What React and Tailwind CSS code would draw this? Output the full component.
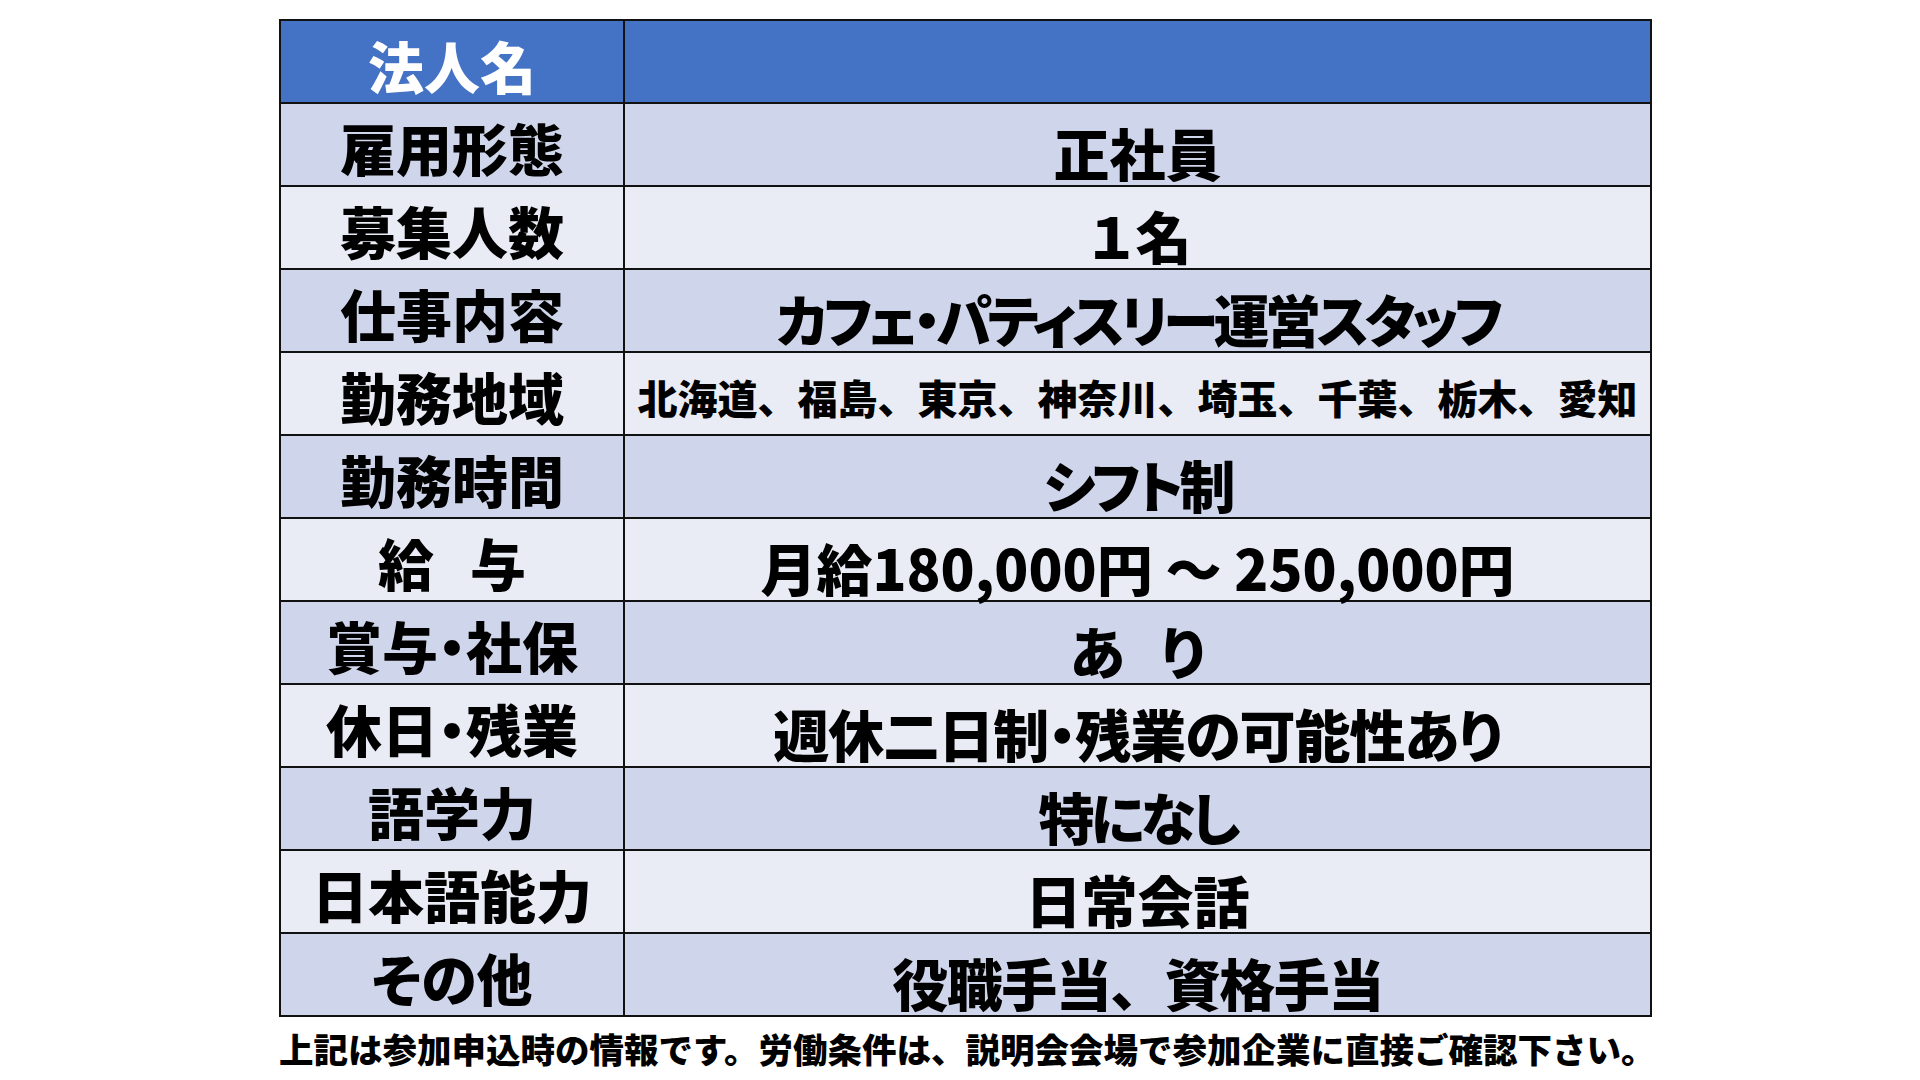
const rows = [
  { label: "雇用形態", value: "正社員" },
  { label: "募集人数", value: <>１<span className="inline-block -ml-[4px]" />名</>, plain: true },
  { label: "仕事内容", value: "カフェ・パティスリー運営スタッフ", track: "tracking-[-4.5px]" },
  { label: "勤務地域", value: "北海道、福島、東京、神奈川、埼玉、千葉、栃木、愛知", small: true },
  { label: "勤務時間", value: "シフト制", track: "tracking-[-4px]" },
  { label: <>給<span className="inline-block w-[36px]" />与</>, value: "月給180,000円 ～ 250,000円" },
  { label: "賞与・社保", value: <>あ<span className="inline-block w-[36px]" />り</> },
  { label: "休日・残業", value: "週休二日制・残業の可能性あり", track: "tracking-[-1px]" },
  { label: "語学力", value: "特になし", track: "tracking-[-4px]" },
  { label: "日本語能力", value: "日常会話" },
  { label: "その他", value: "役職手当、資格手当", plain: true, track: "tracking-[-1.5px]" },
];

export default function App() {
  return (
    <div
      className="w-[1920px] h-[1080px] bg-white overflow-hidden"
      style={{ fontFamily: '"Noto Sans CJK JP", "Noto Sans", sans-serif' }}
    >
      <div className="ml-[279px] pt-[19px] w-[1373px]">
        <table className="w-full border-collapse table-fixed border-2 border-[#111]">
          <colgroup>
            <col className="w-[344px]" />
            <col />
          </colgroup>
          <tbody>
            <tr className="h-[83px] bg-[#4472c4]">
              <td className="border-2 border-[#111] text-center text-white font-black text-[56px] leading-none pt-[6px]">
                法人名
              </td>
              <td className="border-2 border-[#111]"></td>
            </tr>
            {rows.map((r, i) => (
              <tr key={i} className={`h-[83px] ${i % 2 === 0 ? "bg-[#cfd5ea]" : "bg-[#e9ebf5]"}`}>
                <td
                  className="border-2 border-[#111] text-center text-black font-black text-[56px] leading-none whitespace-nowrap pt-[4px]"
                  style={{ fontFeatureSettings: '"palt"' }}
                >
                  {r.label}
                </td>
                <td
                  className={`border-2 border-[#111] text-center text-black font-black leading-none whitespace-nowrap ${
                    r.small ? "text-[40px] pt-[6px]" : "text-[56px] pt-[14px]"
                  } ${r.track || ""}`}
                  style={r.small || r.plain ? undefined : { fontFeatureSettings: '"palt"' }}
                >
                  {r.value}
                </td>
              </tr>
            ))}
          </tbody>
        </table>
        <p className="mt-[14px] text-[34.5px] leading-none font-black text-black whitespace-nowrap">
          上記は参加申込時の情報です。労働条件は、説明会会場で参加企業に直接ご確認下さい。
        </p>
      </div>
    </div>
  );
}
